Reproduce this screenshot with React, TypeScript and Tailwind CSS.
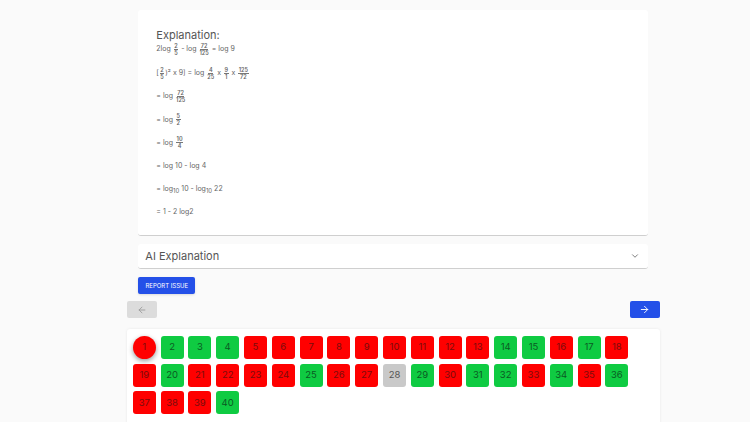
import { ArrowLeft, ArrowRight, ChevronDown } from "lucide-react";
import type { ReactNode } from "react";

const GREEN = [2, 3, 4, 14, 15, 17, 20, 25, 29, 31, 32, 34, 36, 40];

function Frac({ top, bottom }: { top: string; bottom: string }) {
  return (
    <span className="mx-[1px] inline-flex flex-col items-center text-[5.5px] leading-[6px] font-semibold">
      <span className="border-b border-[#777] px-[0.5px]">{top}</span>
      <span>{bottom}</span>
    </span>
  );
}

function Line({ children }: { children: ReactNode }) {
  return <div className="flex h-[23.1px] items-center whitespace-pre">{children}</div>;
}

function Cell({ n }: { n: number }) {
  // question 1 is the current one, 28 was skipped
  let color = "bg-[#ff0000] text-[#7a0c0c]";
  if (GREEN.includes(n)) color = "bg-[#0fcb42] text-[#0b5a22]";
  if (n === 28) color = "bg-[#c9c9c9] text-[#555]";
  const shape = n === 1 ? "rounded-full shadow-[0_2px_5px_rgba(0,0,0,0.4)]" : "rounded-[3px]";
  return (
    <div className={`flex h-[23px] w-[23px] items-center justify-center text-[9.5px] ${color} ${shape}`}>
      {n}
    </div>
  );
}

export default function App() {
  return (
    <div className="h-[422px] overflow-hidden bg-[#fafafa] pt-[10px] pl-[36.6px] font-['Inter',sans-serif] text-[#666]">
      <div className="mx-auto w-[510px]">
        {/* Explanation */}
        <div className="h-[226px] rounded-[3px] border-b border-[#cfcfcf] bg-white px-[18px] pt-[19px] text-[7px]">
          <div className="text-[11px] leading-[13px] text-[#555]">Explanation:</div>
          <div className="-mt-[4px]">
            <Line>
              2log <Frac top="2" bottom="5" /> - log <Frac top="72" bottom="125" /> = log 9
            </Line>
            <div className="h-[1px]" />
            <Line>
              [<Frac top="2" bottom="5" />)² x 9] = log <Frac top="4" bottom="25" /> x <Frac top="9" bottom="1" /> x{" "}
              <Frac top="125" bottom="72" />
            </Line>
            <Line>
              = log <Frac top="72" bottom="125" />
            </Line>
            <Line>
              = log <Frac top="5" bottom="2" />
            </Line>
            <Line>
              = log <Frac top="10" bottom="4" />
            </Line>
            <Line>= log 10 - log 4</Line>
            <Line>
              = log<sub className="text-[6px]">10</sub> 10 - log<sub className="text-[6px]">10</sub> 22
            </Line>
            <Line>= 1 - 2 log2</Line>
          </div>
        </div>

        {/* AI Explanation accordion */}
        <div className="mt-[8px] flex h-[25px] items-center justify-between rounded-[3px] border-b border-[#cfcfcf] bg-white pr-[8px] pl-[7px]">
          <span className="text-[11px] text-[#555]">AI Explanation</span>
          <ChevronDown size={10} strokeWidth={2} className="text-[#666]" />
        </div>

        <button className="mt-[8px] flex h-[17px] w-[57px] items-center justify-center rounded-[2px] bg-[#2450e8] text-[6px] text-white shadow-sm">
          REPORT ISSUE
        </button>
      </div>

      <div className="mx-auto mt-[7px] w-[533px]">
        <div className="flex justify-between">
          <button className="flex h-[17px] w-[30px] items-center justify-center rounded-[2px] bg-[#dcdcdc] text-[#999]">
            <ArrowLeft size={10} />
          </button>
          <button className="flex h-[17px] w-[30px] items-center justify-center rounded-[2px] bg-[#2450e8] text-white">
            <ArrowRight size={11} />
          </button>
        </div>

        {/* Question palette */}
        <div className="mt-[11px] h-[120px] rounded-[3px] bg-white px-[6px] pt-[7px] shadow-[0_0_3px_rgba(0,0,0,0.08)]">
          <div className="grid grid-cols-[repeat(18,23px)] gap-x-[4.8px] gap-y-[4.7px]">
            {Array.from({ length: 40 }, (_, i) => (
              <Cell key={i} n={i + 1} />
            ))}
          </div>
        </div>
      </div>
    </div>
  );
}
